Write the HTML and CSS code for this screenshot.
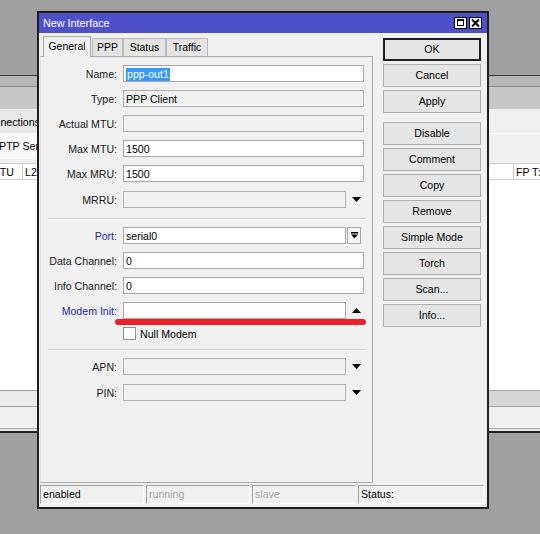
FILE: index.html
```html
<!DOCTYPE html>
<html lang="en">
<head>
    <meta charset="UTF-8">
    <meta name="viewport" content="width=device-width, initial-scale=1.0">
    <title>New Interface</title>
    <link rel="stylesheet" href="styles.css">
</head>
<body>
    <div class="desk-top"></div>

    <!-- window behind the dialog -->
    <div class="backwin">
        <div class="bw-frame"></div>
        <div class="bw-toolbar"></div>
        <div class="bw-tabs"><span class="bw-tab">Connections</span></div>
        <div class="bw-bar"><span class="bw-btn">PPTP Server</span></div>
        <div class="bw-head">
            <div class="bw-col c1"><span>MTU</span></div>
            <div class="bw-col c2">L2 MTU</div>
            <div class="bw-col c3">FP Tx</div>
        </div>
        <div class="bw-list"></div>
        <div class="bw-foot1"></div>
        <div class="bw-foot2"></div>
        <div class="bw-edge"></div>
    </div>

    <div class="dialog">
        <div class="titlebar">
            <span class="title">New Interface</span>
            <span class="tb-btn">
                <svg width="13" height="12" viewBox="0 0 13 12">
                    <rect x="0.5" y="0.5" width="12" height="11" fill="#fff" stroke="#000"/>
                    <rect x="3.5" y="3.5" width="6" height="5" fill="none" stroke="#000"/>
                    <rect x="3" y="2" width="7" height="2" fill="#000"/>
                </svg>
            </span>
            <span class="tb-btn">
                <svg width="13" height="12" viewBox="0 0 13 12">
                    <rect x="0.5" y="0.5" width="12" height="11" fill="#fff" stroke="#000"/>
                    <path d="M3 2.5L10 9.5M10 2.5L3 9.5" stroke="#000" stroke-width="2"/>
                </svg>
            </span>
        </div>

        <div class="dlg-main">
            <div class="left">
                <div class="tabs">
                    <div class="tab active" style="width:48px">General</div>
                    <div class="tab" style="width:31px">PPP</div>
                    <div class="tab" style="width:43px">Status</div>
                    <div class="tab" style="width:42px">Traffic</div>
                </div>
                <div class="panel">
                    <div class="row">
                        <span class="lbl">Name:</span>
                        <div class="fld"><span class="sel">ppp-out1</span></div>
                    </div>
                    <div class="row">
                        <span class="lbl">Type:</span>
                        <div class="fld off">PPP Client</div>
                    </div>
                    <div class="row">
                        <span class="lbl">Actual MTU:</span>
                        <div class="fld off"></div>
                    </div>
                    <div class="row">
                        <span class="lbl">Max MTU:</span>
                        <div class="fld">1500</div>
                    </div>
                    <div class="row">
                        <span class="lbl">Max MRU:</span>
                        <div class="fld">1500</div>
                    </div>
                    <div class="row nudge">
                        <span class="lbl">MRRU:</span>
                        <div class="fld off short"></div>
                        <span class="drop"><svg width="9" height="5" viewBox="0 0 9 5"><path d="M0 0H9L4.5 5Z"/></svg></span>
                    </div>

                    <div class="sep"></div>

                    <div class="row">
                        <span class="lbl blue">Port:</span>
                        <div class="fld short">serial0</div>
                        <span class="pbtn"><svg width="7" height="7" viewBox="0 0 7 7"><rect width="7" height="1.5"/><path d="M0 2.5H7L3.5 6.5Z"/></svg></span>
                    </div>
                    <div class="row">
                        <span class="lbl">Data Channel:</span>
                        <div class="fld">0</div>
                    </div>
                    <div class="row">
                        <span class="lbl">Info Channel:</span>
                        <div class="fld">0</div>
                    </div>
                    <div class="row modem">
                        <span class="lbl blue">Modem Init:</span>
                        <div class="fld short"></div>
                        <span class="drop"><svg width="9" height="5" viewBox="0 0 9 5"><path d="M0 5H9L4.5 0Z"/></svg></span>
                        <div class="mark"></div>
                    </div>
                    <div class="chk-row">
                        <span class="box"></span>
                        <span>Null Modem</span>
                    </div>

                    <div class="sep last"></div>

                    <div class="row">
                        <span class="lbl">APN:</span>
                        <div class="fld off short"></div>
                        <span class="drop"><svg width="9" height="5" viewBox="0 0 9 5"><path d="M0 0H9L4.5 5Z"/></svg></span>
                    </div>
                    <div class="row nudge">
                        <span class="lbl">PIN:</span>
                        <div class="fld off short"></div>
                        <span class="drop"><svg width="9" height="5" viewBox="0 0 9 5"><path d="M0 0H9L4.5 5Z"/></svg></span>
                    </div>
                </div>
            </div>

            <div class="buttons">
                <div class="btn default">OK</div>
                <div class="btn">Cancel</div>
                <div class="btn">Apply</div>
                <div class="btn group">Disable</div>
                <div class="btn">Comment</div>
                <div class="btn">Copy</div>
                <div class="btn">Remove</div>
                <div class="btn">Simple Mode</div>
                <div class="btn">Torch</div>
                <div class="btn">Scan...</div>
                <div class="btn">Info...</div>
            </div>
        </div>

        <div class="statusbar">
            <div class="cell">enabled</div>
            <div class="cell dim">running</div>
            <div class="cell dim">slave</div>
            <div class="cell wide">Status:</div>
        </div>
    </div>
</body>
</html>
```

FILE: styles.css
```css
body{
    margin: 0;
    height: 534px;
    overflow: hidden;
    background: #a0a0a0;
    font-family: "Liberation Sans", Arial, sans-serif;
    font-size: 10.6px;
    color: #000;
}
.desk-top{
    height: 75px;
}

/* window behind */
.bw-frame{
    height: 10px;
    background: #b6b6b6;
    border-top: 1px solid #3a3a3a;
    border-bottom: 1px solid #8a8a8a;
}
.bw-toolbar{
    height: 22px;
    background: #c6c6c6;
}
.bw-tabs{
    height: 24px;
    background: #efefef;
    white-space: nowrap;
}
.bw-tab{
    display: inline-block;
    margin-left: -23px;
    padding: 2px 4px 0 4px;
    line-height: 22px;
    background: #e8e8e8;
    border-right: 1px solid #c8c8c8;
}
.bw-bar{
    height: 29px;
    background: #f0f0f0;
    border-top: 1px solid #fff;
    white-space: nowrap;
}
.bw-btn{
    display: inline-block;
    margin-left: -12px;
    padding: 0 4px;
    line-height: 25px;
    background: #f8f8f8;
}
.bw-head{
    display: flex;
    height: 15px;
    line-height: 16px;
    background: #fff;
    border-top: 1px solid #cbcbcb;
    border-bottom: 1px solid #cbcbcb;
    white-space: nowrap;
}
.bw-col{
    box-sizing: border-box;
    overflow: hidden;
    border-right: 1px solid #cbcbcb;
}
.bw-col.c1{
    width: 23px;
}
.bw-col.c1 span{
    margin-left: -9px;
}
.bw-col.c2{
    width: 491px;
    padding-left: 2px;
}
.bw-col.c3{
    flex: 1;
    padding-left: 2px;
    border-right: none;
}
.bw-list{
    height: 210px;
    background: #fff;
}
.bw-foot1{
    height: 15px;
    background: linear-gradient(to right, #ebebeb 37px, #d6d6d6 37px);
    border-top: 1px solid #a0a0a0;
    border-bottom: 1px solid #a0a0a0;
}
.bw-foot2{
    height: 21px;
    background: #f0f0f0;
    border-bottom: 1px solid #a8a8a8;
}
.bw-edge{
    height: 2px;
    background: #e6e6e6;
    border-bottom: 2px solid #222;
}

/* dialog */
.dialog{
    position: absolute;
    left: 37px;
    top: 11px;
    width: 452px;
    height: 498px;
    box-sizing: border-box;
    border: 2px solid #1e1e1e;
    background: #f0f0f0;
    display: flex;
    flex-direction: column;
}
.titlebar{
    height: 20px;
    display: flex;
    align-items: center;
    padding: 0 5px 0 4px;
    background: #4d50c8;
    color: #fff;
}
.title{
    flex: 1;
    font-size: 10.8px;
}
.tb-btn{
    display: flex;
    margin-left: 2px;
}
.dlg-main{
    display: flex;
    padding: 3px 0 0 1px;
}
.left{
    width: 333px;
}
.tabs{
    display: flex;
    align-items: flex-end;
    height: 20px;
    padding-left: 3px;
    position: relative;
    z-index: 1;
}
.tab{
    height: 18px;
    box-sizing: border-box;
    border: 1px solid #b9b9b9;
    border-bottom: none;
    background: #e3e3e3;
    text-align: center;
    line-height: 17px;
    font-size: 10.4px;
}
.tab.active{
    height: 21px;
    margin-bottom: -1px;
    margin-right: 1px;
    background: #f0f0f0;
    border-color: #a9a9a9;
    line-height: 19px;
}
.panel{
    height: 427px;
    box-sizing: border-box;
    border: 1px solid #a9a9a9;
    border-left-color: #e2e2e2;
    padding-top: 8px;
    display: flex;
    flex-direction: column;
}
.row{
    position: relative;
    display: flex;
    align-items: center;
    height: 17px;
    margin-bottom: 8px;
}
.row.nudge{
    margin-top: 1px;
}
.lbl{
    width: 76px;
    margin-right: 6px;
    text-align: right;
    color: #1a1a1a;
}
.lbl.blue{
    color: #2626a6;
}
.fld{
    width: 241px;
    height: 17px;
    box-sizing: border-box;
    border: 1px solid #a6a6a6;
    background: #fff;
    padding-left: 2px;
    line-height: 16px;
    white-space: nowrap;
}
.fld.off{
    background: #f0f0f0;
    border-color: #b0b0b0;
}
.fld.short{
    width: 223px;
}
.sel{
    display: inline-block;
    line-height: 13px;
    padding: 0 1px;
    background: #3399ff;
    color: #fff;
}
.drop{
    display: flex;
    margin-left: 6px;
}
.pbtn{
    width: 14px;
    height: 17px;
    box-sizing: border-box;
    margin-left: 1px;
    border: 1px solid #a6a6a6;
    background: #f5f5f5;
    display: flex;
    align-items: center;
    justify-content: center;
}
.mark{
    position: absolute;
    left: 74px;
    top: 17px;
    width: 251px;
    height: 6px;
    border-radius: 3px;
    background: #e8202a;
}
.chk-row{
    display: flex;
    align-items: center;
    height: 13px;
    padding-left: 82px;
    margin-bottom: 9px;
}
.box{
    width: 13px;
    height: 13px;
    box-sizing: border-box;
    border: 1px solid #8e8e8e;
    background: #fff;
    margin-right: 4px;
}
.sep{
    border-top: 1px solid #cfcfcf;
    border-bottom: 1px solid #fff;
    margin: 2px 6px 7px 7px;
}
.sep.last{
    margin-top: 0;
}

.buttons{
    width: 98px;
    margin-left: 10px;
    padding-top: 2px;
    display: flex;
    flex-direction: column;
    gap: 3px;
}
.btn{
    height: 23px;
    box-sizing: border-box;
    border: 1px solid #adadad;
    background: #e5e5e5;
    text-align: center;
    line-height: 21px;
}
.btn.default{
    border: 2px solid #1e1e1e;
    line-height: 19px;
}
.btn.group{
    margin-top: 6px;
}

.statusbar{
    display: flex;
    gap: 2px;
    height: 19px;
    margin: 2px 0 0 1px;
}
.cell{
    width: 104px;
    box-sizing: border-box;
    border-top: 1px solid #a0a0a0;
    border-left: 1px solid #a0a0a0;
    border-right: 1px solid #fbfbfb;
    border-bottom: 1px solid #fbfbfb;
    padding-left: 2px;
    line-height: 17px;
}
.cell.dim{
    color: #a3a3a3;
}
.cell.wide{
    width: 126px;
}
```
